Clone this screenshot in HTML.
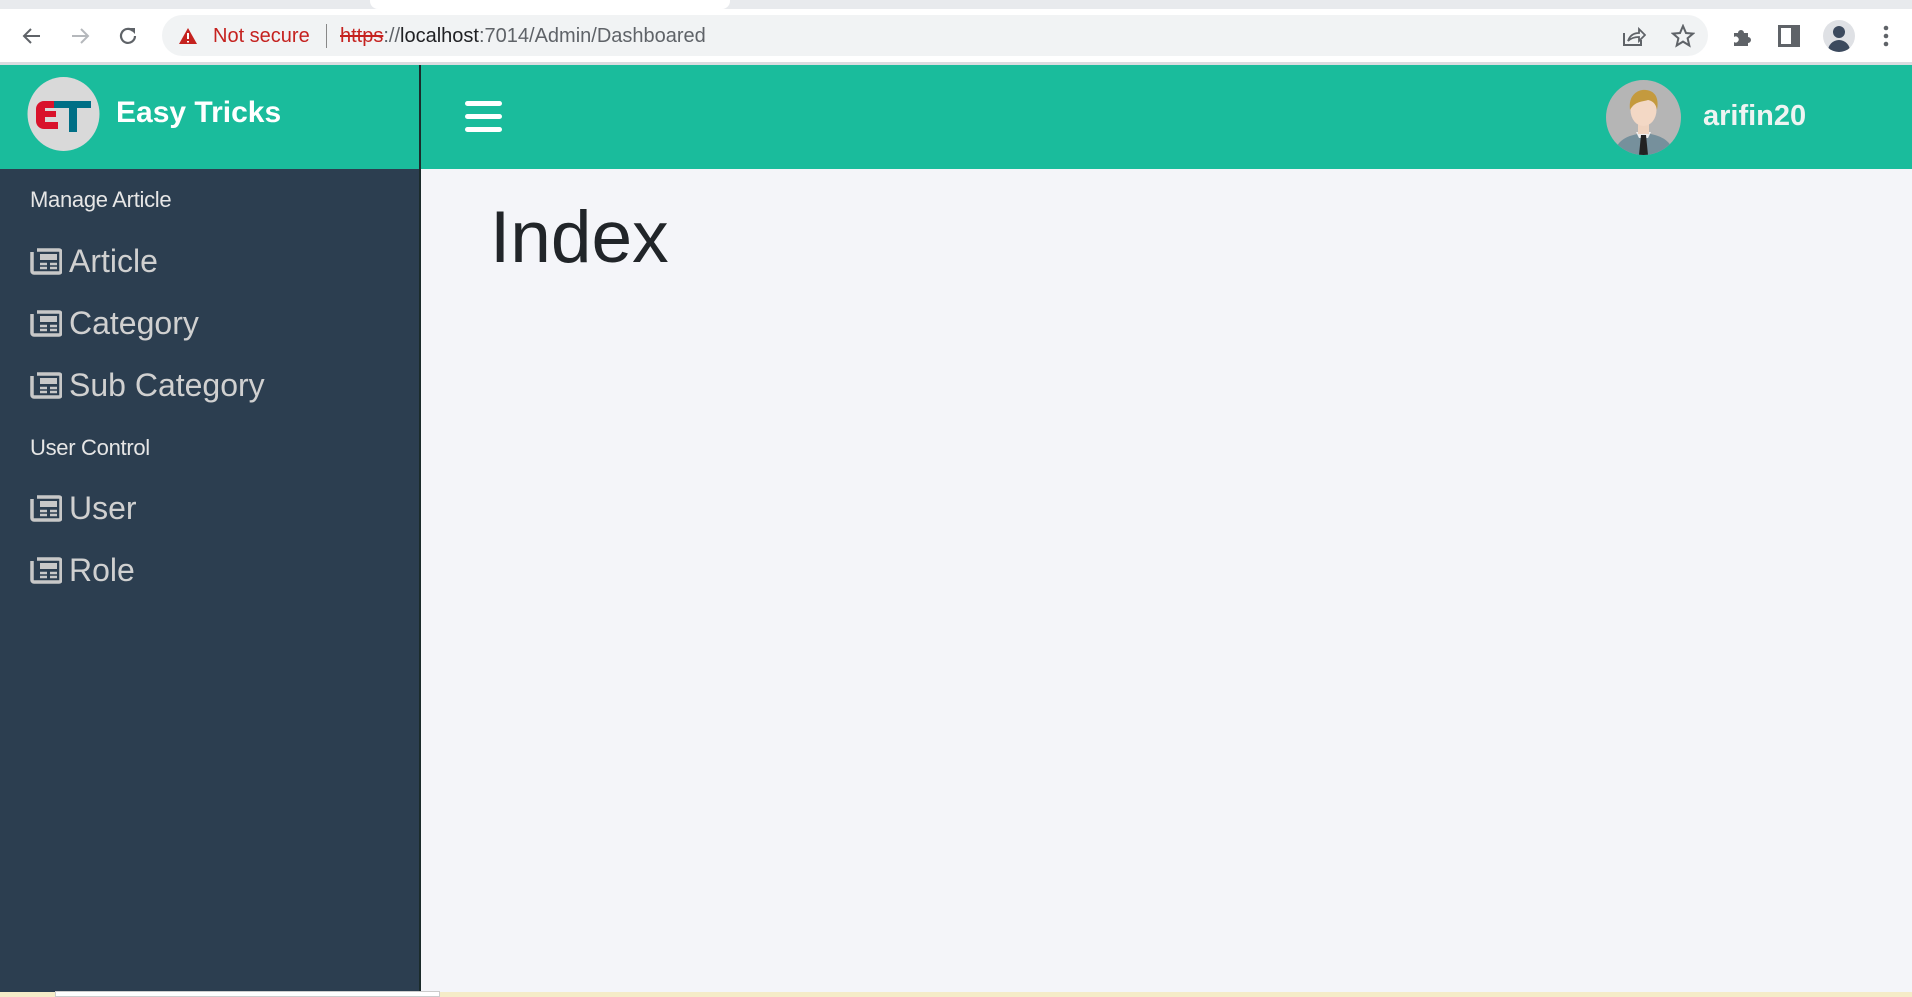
<!DOCTYPE html>
<html><head><style>
*{margin:0;padding:0;box-sizing:border-box}
body{width:1912px;height:997px;overflow:hidden;font-family:"Liberation Sans",sans-serif;background:#f4f5f9;position:relative}
.abs{position:absolute}
.tabs{left:0;top:0;width:1912px;height:9px;background:#e8eaed}
.tb{left:0;top:9px;width:1912px;height:53px;background:#fff}
.line{left:0;top:62px;width:1912px;height:3px;background:#dadce0}
.url{left:162px;top:15px;width:1546px;height:41px;border-radius:21px;background:#f1f3f4}
.hdr{left:0;top:65px;width:1912px;height:104px;background:#1abc9c}
.side{left:0;top:169px;width:420px;height:823px;background:#2c3e50}
.sep{left:419px;top:65px;width:2px;height:927px;background:#1b2b2b}
.bot{left:0;top:992px;width:1912px;height:5px;background:#f5ecc8}
.sec{color:#e6e6e6;font-size:22px;left:30px;letter-spacing:-0.3px}
.item{color:#d0d0d0;font-size:32px;left:30px;display:flex;align-items:center}
.item svg{margin-right:7px}
</style></head><body>
<div class="abs tabs"></div>
<div class="abs" style="left:370px;top:0;width:360px;height:9px;background:#fff;border-radius:0 0 8px 8px"></div>
<div class="abs tb"></div>
<div class="abs line"></div>
<svg class="abs" style="left:20px;top:24px" width="24" height="24" viewBox="0 0 24 24"><path d="M20 12H5M11 5l-7 7 7 7" stroke="#5f6368" stroke-width="2" fill="none"/></svg>
<svg class="abs" style="left:68px;top:24px" width="24" height="24" viewBox="0 0 24 24"><path d="M4 12h15M13 5l7 7-7 7" stroke="#b5b8bc" stroke-width="2" fill="none"/></svg>
<svg class="abs" style="left:116px;top:24px" width="24" height="24" viewBox="0 0 24 24"><path d="M19 12a7 7 0 1 1-2-5" stroke="#5f6368" stroke-width="2.2" fill="none"/><path d="M13 4h6v6z" fill="#5f6368"/></svg>
<div class="abs url"></div>
<svg class="abs" style="left:178px;top:27px" width="20" height="18" viewBox="0 0 20 18"><path d="M10 1L19 17H1z" fill="#c5221f"/><path d="M10 6v6M10 14v1.5" stroke="#fff" stroke-width="2"/></svg>
<div class="abs" style="left:213px;top:25px;font-size:20px;color:#c5221f">Not secure</div>
<div class="abs" style="left:326px;top:24px;width:1px;height:24px;background:#888"></div>
<div class="abs" style="left:340px;top:25px;font-size:20px;color:#5f6368"><span style="color:#c5221f;text-decoration:line-through">https</span>://<span style="color:#202124">localhost</span>:7014/Admin/Dashboared</div>
<svg class="abs" style="left:1622px;top:25px" width="24" height="22" viewBox="0 0 24 22"><path d="M2 8v12h17v-5" stroke="#5f6368" stroke-width="2" fill="none"/><path d="M6 16c2-6 6-8 11-8V4l6 6-6 6v-4c-5 0-8 1-11 4z" stroke="#5f6368" stroke-width="1.8" fill="none"/></svg>
<svg class="abs" style="left:1671px;top:24px" width="24" height="24" viewBox="0 0 24 24"><path d="M12 2l3 7 7 .6-5.4 4.6 1.7 7.3L12 17.6 5.7 21.5l1.7-7.3L2 9.6 9 9z" stroke="#5f6368" stroke-width="2" fill="none"/></svg>
<svg class="abs" style="left:1731px;top:24px" width="24" height="24" viewBox="0 0 24 24"><path d="M3 9h4a3 3 0 1 1 6 0h4v4a3 3 0 1 1 0 6v3H3v-4a3 3 0 1 0 0-5z" fill="#5f6368"/></svg>
<svg class="abs" style="left:1778px;top:25px" width="22" height="22" viewBox="0 0 22 22"><rect x="1.5" y="1.5" width="19" height="19" fill="none" stroke="#5f6368" stroke-width="3"/><rect x="13" y="2" width="7" height="18" fill="#5f6368"/></svg>
<div class="abs" style="left:1823px;top:20px;width:32px;height:32px;border-radius:50%;background:#dfe1e5;overflow:hidden"><div class="abs" style="left:10px;top:6px;width:12px;height:12px;border-radius:50%;background:#3c4a5e"></div><div class="abs" style="left:5px;top:20px;width:22px;height:14px;border-radius:11px 11px 0 0;background:#3c4a5e"></div></div>
<svg class="abs" style="left:1882px;top:25px" width="8" height="24" viewBox="0 0 8 24"><circle cx="4" cy="3" r="2.3" fill="#5f6368"/><circle cx="4" cy="11" r="2.3" fill="#5f6368"/><circle cx="4" cy="19" r="2.3" fill="#5f6368"/></svg>

<div class="abs hdr"></div>
<div class="abs side"></div>
<div class="abs sep"></div>
<div class="abs bot"></div>
<div class="abs" style="left:55px;top:991px;width:385px;height:6px;background:#fff;border:1px solid #ccc"></div>

<svg class="abs" style="left:27px;top:77px" width="73" height="74" viewBox="0 0 73 74"><ellipse cx="36.5" cy="37" rx="36" ry="37" fill="#d9d9d9"/><path d="M31 24H17a8 8 0 0 0-8 8v12a8 8 0 0 0 8 8h14v-7H18v-5h11v-6H18v-3h13z" fill="#d9122b"/><path d="M27 24h37v7H50v24h-8V31H27z" fill="#006f86"/></svg>
<div class="abs" style="left:116px;top:96px;font-size:30px;font-weight:bold;color:#fff">Easy Tricks</div>
<div class="abs" style="left:465px;top:101px;width:37px;height:5px;border-radius:3px;background:#fff"></div>
<div class="abs" style="left:465px;top:114px;width:37px;height:5px;border-radius:3px;background:#fff"></div>
<div class="abs" style="left:465px;top:127px;width:37px;height:5px;border-radius:3px;background:#fff"></div>

<svg class="abs" style="left:1606px;top:80px" width="75" height="75" viewBox="0 0 75 75"><defs><clipPath id="c"><circle cx="37.5" cy="37.5" r="37.5"/></clipPath></defs><g clip-path="url(#c)"><rect width="75" height="75" fill="#b5b5b5"/><path d="M8 75c2-14 12-20 30-22 18 2 28 8 30 22z" fill="#76909c"/><path d="M30 52h15l-3 6h-9z" fill="#eee"/><path d="M35 55h5l2 20h-9z" fill="#222"/><rect x="32" y="42" width="11" height="12" fill="#efd3bf"/><ellipse cx="37.5" cy="30" rx="13" ry="16" fill="#f3d8c5"/><path d="M24 30c-2-15 8-21 16-20 10 1 13 9 11 20-1-6-4-9-9-10-6 2-13 1-18 10z" fill="#c49a3e"/></g></svg>
<div class="abs" style="left:1703px;top:100px;font-size:29px;font-weight:bold;color:#eef4f2">arifin20</div>

<div class="abs" style="left:490px;top:196px;font-size:73px;color:#212529">Index</div>

<div class="abs sec" style="top:187px">Manage Article</div>
<div class="abs sec" style="top:435px">User Control</div>
<div class="abs item" style="top:243px"><svg width="32" height="27" viewBox="0 0 32 27"><path d="M2 4v19a2 2 0 0 0 2 2M7 2h22a2 2 0 0 1 2 2v19a2 2 0 0 1-2 2H4a2 2 0 0 1-2-2" fill="none" stroke="#c8c8c8" stroke-width="3.5"/><rect x="10" y="6" width="17" height="6" fill="#c8c8c8"/><path d="M10 16h7M20 16h7M10 20h7M20 20h7" stroke="#c8c8c8" stroke-width="2.5"/></svg>Article</div>
<div class="abs item" style="top:305px"><svg width="32" height="27" viewBox="0 0 32 27"><path d="M2 4v19a2 2 0 0 0 2 2M7 2h22a2 2 0 0 1 2 2v19a2 2 0 0 1-2 2H4a2 2 0 0 1-2-2" fill="none" stroke="#c8c8c8" stroke-width="3.5"/><rect x="10" y="6" width="17" height="6" fill="#c8c8c8"/><path d="M10 16h7M20 16h7M10 20h7M20 20h7" stroke="#c8c8c8" stroke-width="2.5"/></svg>Category</div>
<div class="abs item" style="top:367px"><svg width="32" height="27" viewBox="0 0 32 27"><path d="M2 4v19a2 2 0 0 0 2 2M7 2h22a2 2 0 0 1 2 2v19a2 2 0 0 1-2 2H4a2 2 0 0 1-2-2" fill="none" stroke="#c8c8c8" stroke-width="3.5"/><rect x="10" y="6" width="17" height="6" fill="#c8c8c8"/><path d="M10 16h7M20 16h7M10 20h7M20 20h7" stroke="#c8c8c8" stroke-width="2.5"/></svg>Sub Category</div>
<div class="abs item" style="top:490px"><svg width="32" height="27" viewBox="0 0 32 27"><path d="M2 4v19a2 2 0 0 0 2 2M7 2h22a2 2 0 0 1 2 2v19a2 2 0 0 1-2 2H4a2 2 0 0 1-2-2" fill="none" stroke="#c8c8c8" stroke-width="3.5"/><rect x="10" y="6" width="17" height="6" fill="#c8c8c8"/><path d="M10 16h7M20 16h7M10 20h7M20 20h7" stroke="#c8c8c8" stroke-width="2.5"/></svg>User</div>
<div class="abs item" style="top:552px"><svg width="32" height="27" viewBox="0 0 32 27"><path d="M2 4v19a2 2 0 0 0 2 2M7 2h22a2 2 0 0 1 2 2v19a2 2 0 0 1-2 2H4a2 2 0 0 1-2-2" fill="none" stroke="#c8c8c8" stroke-width="3.5"/><rect x="10" y="6" width="17" height="6" fill="#c8c8c8"/><path d="M10 16h7M20 16h7M10 20h7M20 20h7" stroke="#c8c8c8" stroke-width="2.5"/></svg>Role</div>
</body></html>
